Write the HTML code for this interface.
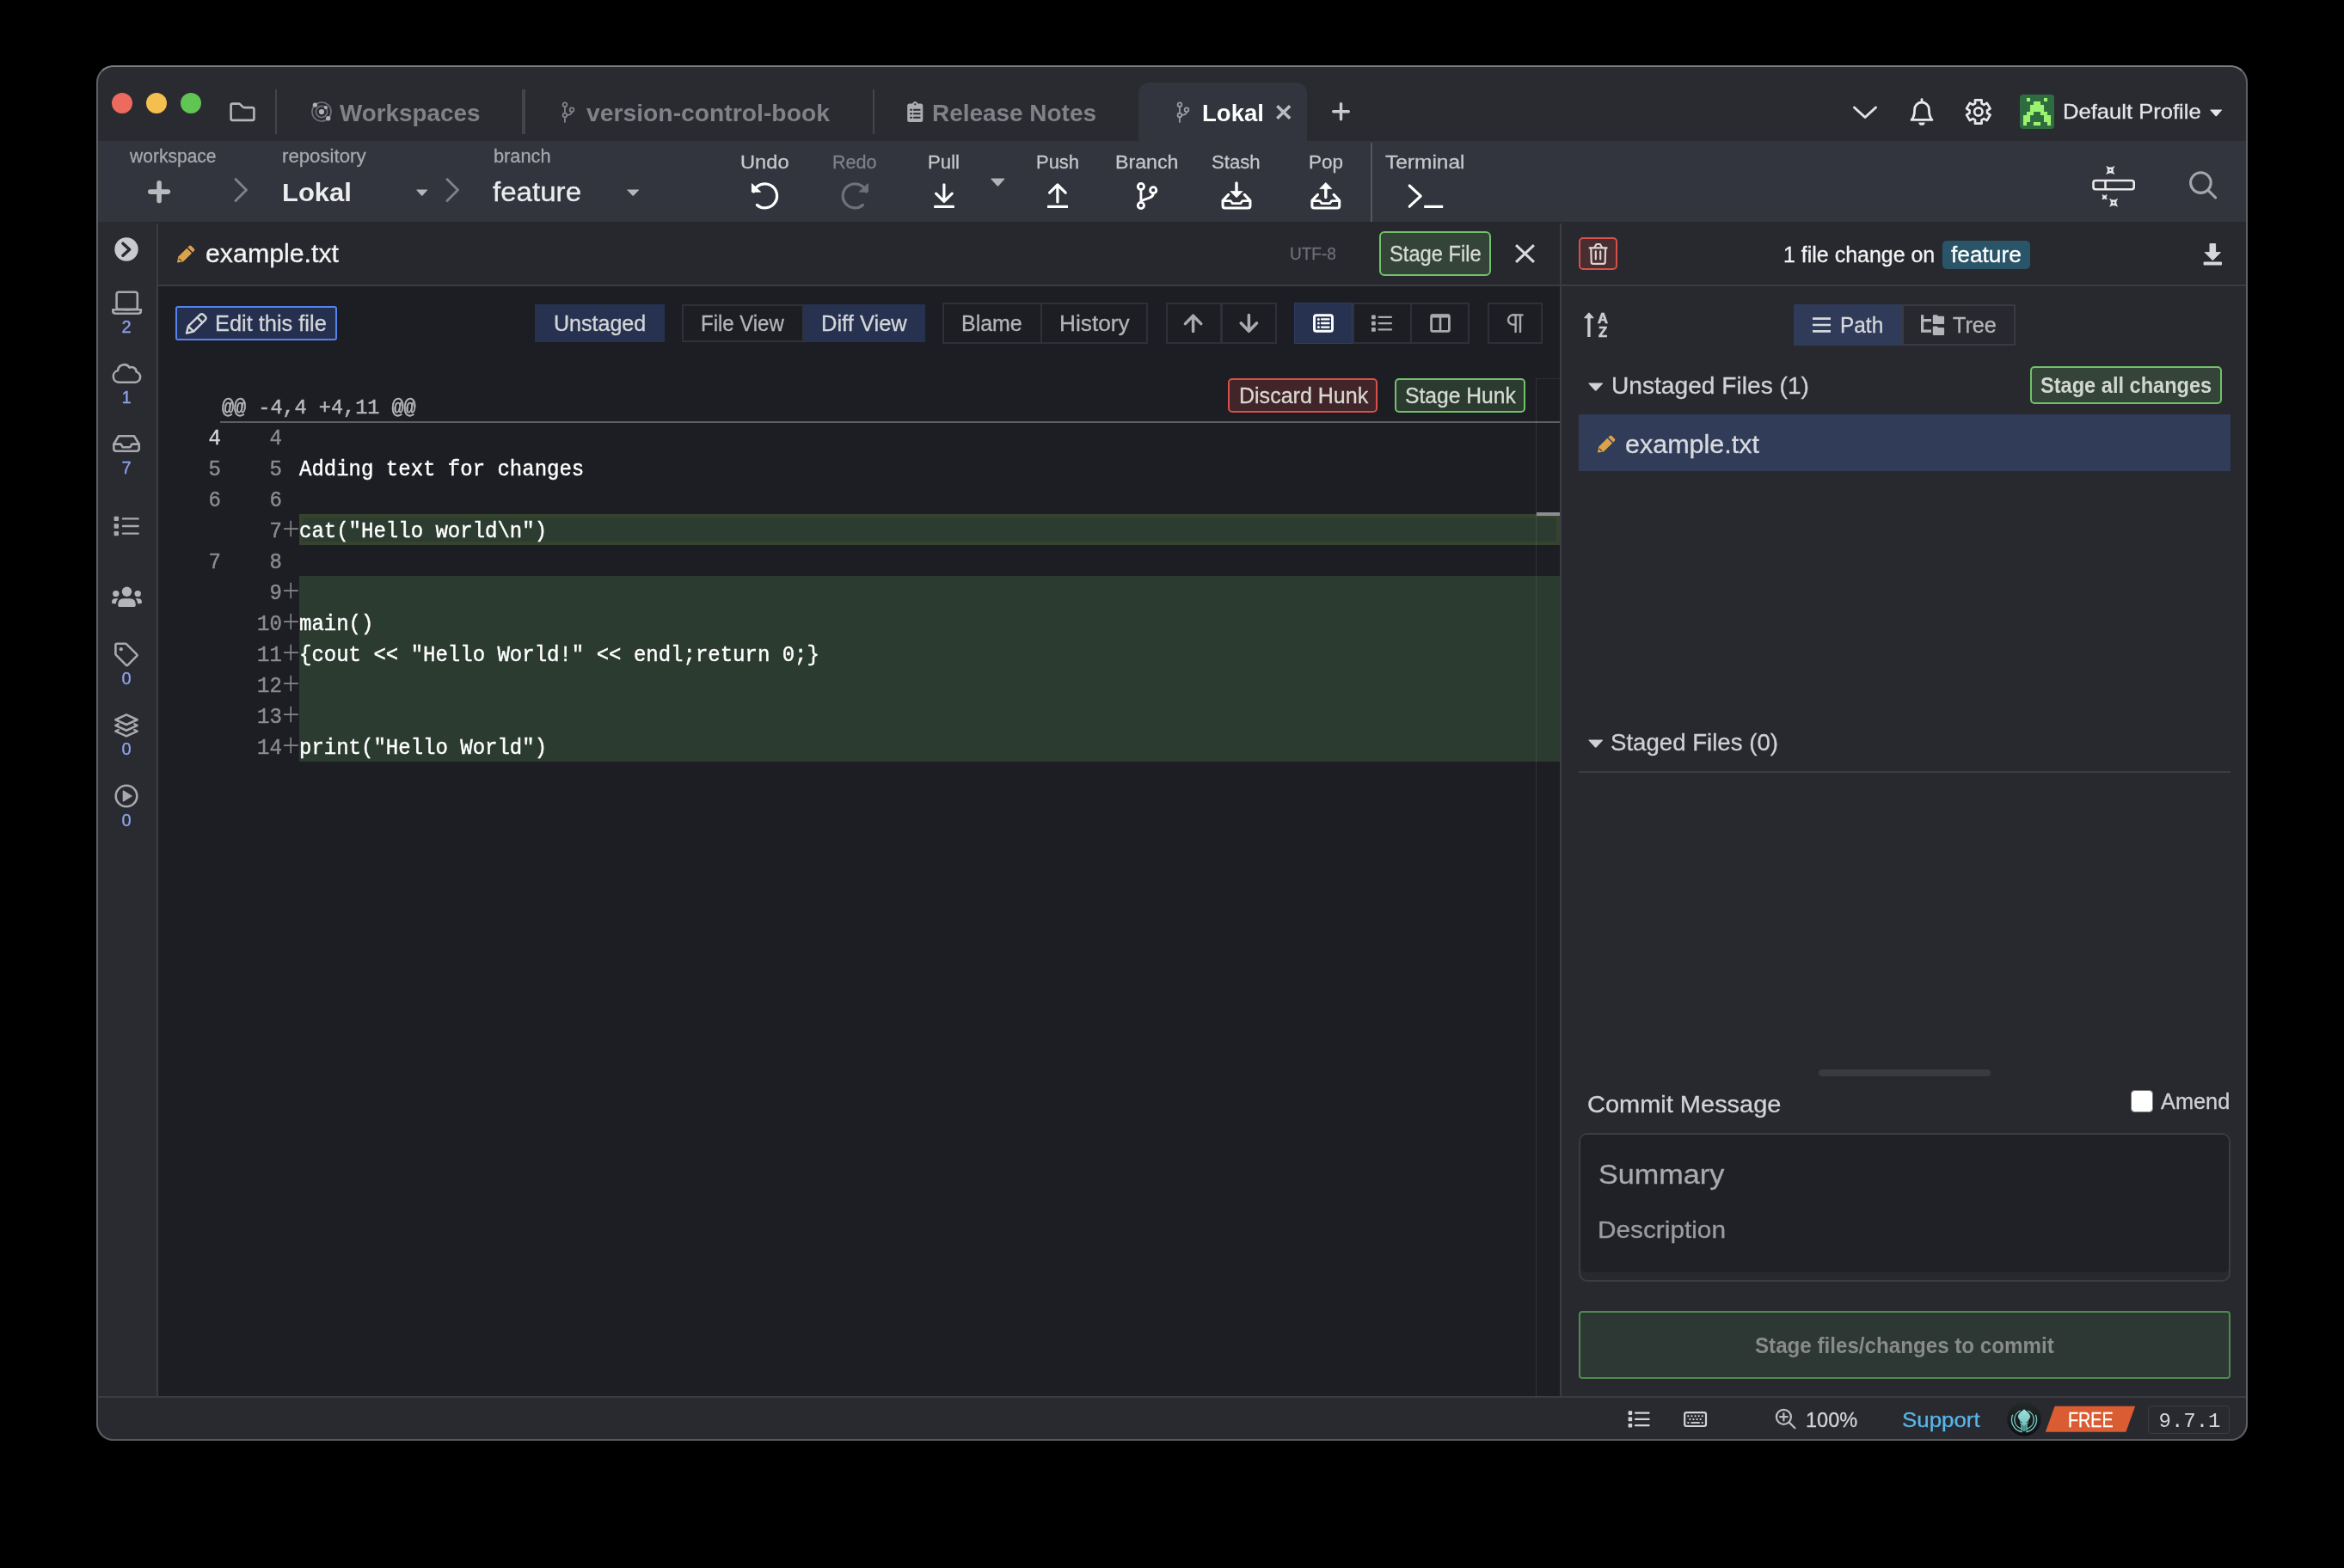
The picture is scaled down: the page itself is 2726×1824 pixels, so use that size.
<!DOCTYPE html>
<html><head><meta charset="utf-8"><title>GitKraken</title>
<style>
html,body{margin:0;padding:0;background:#000;}
body{width:2726px;height:1824px;overflow:hidden;position:relative;font-family:"Liberation Sans",sans-serif;}
#win{will-change:transform;position:absolute;left:112px;top:76px;width:2502px;height:1600px;border-radius:20px;overflow:hidden;background:#1d1e23;}
#winb{position:absolute;left:112px;top:76px;width:2502px;height:1600px;border-radius:20px;box-sizing:border-box;border:2px solid #5f6065;border-top-color:#7e7e83;border-bottom-color:#58595e;pointer-events:none;}
svg{display:block}
</style></head><body>
<div id="win">
<div  style="position:absolute;left:0px;top:0px;width:2502px;height:88px;background:#2a2b31"></div>
<div  style="position:absolute;left:0px;top:88px;width:2502px;height:94px;background:#32343e"></div>
<div  style="position:absolute;left:0px;top:182px;width:70px;height:1367px;background:#2a2b31"></div>
<div  style="position:absolute;left:70px;top:182px;width:1634px;height:73px;background:#27282e"></div>
<div  style="position:absolute;left:72px;top:255px;width:1630px;height:2px;background:#3b3c42"></div>
<div  style="position:absolute;left:70px;top:184px;width:2px;height:1365px;background:#3b3c42"></div>
<div  style="position:absolute;left:72px;top:257px;width:1630px;height:1292px;background:#1d1e23"></div>
<div  style="position:absolute;left:1704px;top:182px;width:798px;height:1367px;background:#27292f"></div>
<div  style="position:absolute;left:1704px;top:255px;width:798px;height:2px;background:#3b3c42"></div>
<div  style="position:absolute;left:1702px;top:184px;width:2px;height:1365px;background:#3b3c42"></div>
<div  style="position:absolute;left:0px;top:1549px;width:2502px;height:51px;background:#292a30"></div>
<div  style="position:absolute;left:0px;top:1548px;width:2502px;height:2px;background:#3b3c42"></div>
<div  style="position:absolute;left:18px;top:32px;width:24px;height:24px;background:#ed6a5e;border-radius:50%"></div>
<div  style="position:absolute;left:58px;top:32px;width:24px;height:24px;background:#f5bf4f;border-radius:50%"></div>
<div  style="position:absolute;left:98px;top:32px;width:24px;height:24px;background:#61c554;border-radius:50%"></div>
<svg style="position:absolute;left:155px;top:42.5px;overflow:visible;" width="30" height="22.5" viewBox="0 0 30 22.5" preserveAspectRatio="none"><path d="M1.6 3.6Q1.6 1.6 3.6 1.6H10.6Q11.6 1.6 12.3 2.3L15.4 5.4Q16.1 6.1 17.1 6.1H26.4Q28.4 6.1 28.4 8.1V18.9Q28.4 20.9 26.4 20.9H3.6Q1.6 20.9 1.6 18.9Z" fill="none" stroke="#b3b5ba" stroke-width="2.6" stroke-linejoin="round"/></svg>
<div  style="position:absolute;left:208px;top:28px;width:2px;height:52px;background:#44454b"></div>
<div  style="position:absolute;left:495px;top:28px;width:4px;height:52px;background:#44454b"></div>
<div  style="position:absolute;left:903px;top:28px;width:2px;height:52px;background:#44454b"></div>
<svg style="position:absolute;left:250px;top:42px;overflow:visible;" width="24" height="24" viewBox="0 0 24 24" preserveAspectRatio="none"><g fill="none" stroke="#6d6f76" stroke-width="1.7"><circle cx="12" cy="12" r="11"/><circle cx="12" cy="12" r="6.6"/></g><circle cx="12" cy="12" r="3.1" fill="#b0b2b6"/><circle cx="4.4" cy="4.1" r="2.7" fill="#b0b2b6"/><circle cx="19.7" cy="19.8" r="2.7" fill="#b0b2b6"/><circle cx="16.9" cy="7.1" r="2.1" fill="#b0b2b6"/></svg>
<div style="position:absolute;top:41.50px;font:bold 28px/1 'Liberation Sans', sans-serif;color:#808288;white-space:pre;transform:scaleX(0.9939);transform-origin:0 0;left:283.12px;">Workspaces</div>
<svg style="position:absolute;left:541px;top:42.5px;overflow:visible;" width="15" height="23" viewBox="0 0 16 24" preserveAspectRatio="none"><g fill="none" stroke="#808288" stroke-width="1.9" stroke-linecap="round"><circle cx="4.2" cy="2.9" r="2.5"/><circle cx="4.2" cy="15.7" r="2.5"/><circle cx="12.8" cy="9.2" r="2.5"/><path d="M4.2 5.4V13.2M4.2 18.2V23.9M12.8 11.7C12.8 15.2 8 15.4 6.7 15.7"/></g></svg>
<div style="position:absolute;top:41.50px;font:bold 28px/1 'Liberation Sans', sans-serif;color:#808288;white-space:pre;transform:scaleX(1.0105);transform-origin:0 0;left:570.02px;">version-control-book</div>
<svg style="position:absolute;left:942.5px;top:42px;overflow:visible;" width="18.5" height="24" viewBox="0 0 18.5 24" preserveAspectRatio="none"><path d="M6.2 2.6A3.1 3.1 0 0 1 12.3 2.6H15.8Q18.3 2.6 18.3 5.1V21.4Q18.3 23.9 15.8 23.9H2.7Q0.2 23.9 0.2 21.4V5.1Q0.2 2.6 2.7 2.6Z" fill="#acadb1"/><circle cx="9.25" cy="3.3" r="1.15" fill="#2a2b31"/><g stroke="#2a2b31" stroke-width="2.1" stroke-linecap="round"><path d="M4 9.8H5M8 9.8H14.6M4 14.3H5M8 14.3H14.6M4 18.8H5M8 18.8H14.6"/></g></svg>
<div style="position:absolute;top:41.50px;font:bold 28px/1 'Liberation Sans', sans-serif;color:#808288;white-space:pre;transform:scaleX(0.9975);transform-origin:0 0;left:971.72px;">Release Notes</div>
<div  style="position:absolute;left:1212px;top:20px;width:196px;height:68px;background:#32343e;border-radius:12px 12px 0 0"></div>
<svg style="position:absolute;left:1256px;top:42.5px;overflow:visible;" width="15" height="23" viewBox="0 0 16 24" preserveAspectRatio="none"><g fill="none" stroke="#9a9ca2" stroke-width="1.9" stroke-linecap="round"><circle cx="4.2" cy="2.9" r="2.5"/><circle cx="4.2" cy="15.7" r="2.5"/><circle cx="12.8" cy="9.2" r="2.5"/><path d="M4.2 5.4V13.2M4.2 18.2V23.9M12.8 11.7C12.8 15.2 8 15.4 6.7 15.7"/></g></svg>
<div style="position:absolute;top:41.50px;font:bold 28px/1 'Liberation Sans', sans-serif;color:#ffffff;white-space:pre;transform:scaleX(0.9839);transform-origin:0 0;left:1286.02px;">Lokal</div>
<svg style="position:absolute;left:1371.5px;top:45.5px;overflow:visible;" width="17.5" height="17" viewBox="0 0 17.5 17.0" preserveAspectRatio="none"><path d="M1.296 1.296L16.204 15.704M16.204 1.296L1.296 15.704" fill="none" stroke="#b9bbc0" stroke-width="3.6" stroke-linecap="butt"/></svg>
<svg style="position:absolute;left:1437px;top:43px;overflow:visible;" width="21" height="21.5" viewBox="0 0 21 21.5" preserveAspectRatio="none"><path d="M10.5 1.7V19.8M1.7 10.75H19.3" fill="none" stroke="#c9cacd" stroke-width="3.4" stroke-linecap="round"/></svg>
<svg style="position:absolute;left:2043px;top:47px;overflow:visible;" width="28" height="15.5" viewBox="0 0 28 15.5" preserveAspectRatio="none"><path d="M1.5 2.0L14.0 13.5L26.5 2.0" fill="none" stroke="#e3e3e5" stroke-width="3" stroke-linecap="round" stroke-linejoin="round"/></svg>
<svg style="position:absolute;left:2109px;top:37.5px;overflow:visible;" width="28" height="32.5" viewBox="0 0 28 32.5" preserveAspectRatio="none"><g fill="none" stroke="#e8e8ea" stroke-width="2.8" stroke-linejoin="round" stroke-linecap="round"><path d="M14 1.6V3.6"/><path d="M2 25.4C5.4 22 5.6 18.5 5.6 13.4A8.4 8.4 0 0 1 22.4 13.4C22.4 18.5 22.6 22 26 25.4Z"/></g><path d="M10.4 28.4H17.6A3.6 3.4 0 0 1 10.4 28.4Z" fill="#e8e8ea"/></svg>
<svg style="position:absolute;left:0;top:0;overflow:visible" width="1" height="1"><g transform="translate(-112 -76)"><path d="M2297.03 120.42L2297.01 116.32L2304.59 116.32L2304.57 120.42A10.3 10.3 0 0 1 2307.21 121.94L2310.75 119.87L2314.55 126.44L2310.99 128.48A10.3 10.3 0 0 1 2310.99 131.52L2314.55 133.56L2310.75 140.13L2307.21 138.06A10.3 10.3 0 0 1 2304.57 139.58L2304.59 143.68L2297.01 143.68L2297.03 139.58A10.3 10.3 0 0 1 2294.39 138.06L2290.85 140.13L2287.05 133.56L2290.61 131.52A10.3 10.3 0 0 1 2290.61 128.48L2287.05 126.44L2290.85 119.87L2294.39 121.94A10.3 10.3 0 0 1 2297.03 120.42Z" fill="none" stroke="#e8e8ea" stroke-width="2.7" stroke-linejoin="round"/><circle cx="2300.8" cy="130" r="4.65" fill="none" stroke="#e8e8ea" stroke-width="2.7"/></g></svg>
<svg style="position:absolute;left:2237px;top:34px;overflow:visible;" width="40" height="40" viewBox="0 0 40 40" preserveAspectRatio="none"><rect width="40" height="40" rx="4" fill="#2e6b3f"/><rect x="7.95" y="3.95" width="4.1" height="4.1" fill="#9bf26f"/><rect x="27.95" y="3.95" width="4.1" height="4.1" fill="#9bf26f"/><rect x="15.95" y="7.95" width="4.1" height="4.1" fill="#9bf26f"/><rect x="19.95" y="7.95" width="4.1" height="4.1" fill="#9bf26f"/><rect x="11.95" y="11.95" width="4.1" height="4.1" fill="#9bf26f"/><rect x="15.95" y="11.95" width="4.1" height="4.1" fill="#9bf26f"/><rect x="19.95" y="11.95" width="4.1" height="4.1" fill="#9bf26f"/><rect x="23.95" y="11.95" width="4.1" height="4.1" fill="#9bf26f"/><rect x="11.95" y="15.95" width="4.1" height="4.1" fill="#9bf26f"/><rect x="15.95" y="15.95" width="4.1" height="4.1" fill="#9bf26f"/><rect x="19.95" y="15.95" width="4.1" height="4.1" fill="#9bf26f"/><rect x="23.95" y="15.95" width="4.1" height="4.1" fill="#9bf26f"/><rect x="7.95" y="19.95" width="4.1" height="4.1" fill="#9bf26f"/><rect x="11.95" y="19.95" width="4.1" height="4.1" fill="#9bf26f"/><rect x="23.95" y="19.95" width="4.1" height="4.1" fill="#9bf26f"/><rect x="27.95" y="19.95" width="4.1" height="4.1" fill="#9bf26f"/><rect x="3.95" y="23.95" width="4.1" height="4.1" fill="#9bf26f"/><rect x="7.95" y="23.95" width="4.1" height="4.1" fill="#9bf26f"/><rect x="27.95" y="23.95" width="4.1" height="4.1" fill="#9bf26f"/><rect x="31.95" y="23.95" width="4.1" height="4.1" fill="#9bf26f"/><rect x="3.95" y="27.95" width="4.1" height="4.1" fill="#9bf26f"/><rect x="7.95" y="27.95" width="4.1" height="4.1" fill="#9bf26f"/><rect x="27.95" y="27.95" width="4.1" height="4.1" fill="#9bf26f"/><rect x="31.95" y="27.95" width="4.1" height="4.1" fill="#9bf26f"/><rect x="3.95" y="31.95" width="4.1" height="4.1" fill="#9bf26f"/><rect x="15.95" y="31.95" width="4.1" height="4.1" fill="#9bf26f"/><rect x="19.95" y="31.95" width="4.1" height="4.1" fill="#9bf26f"/><rect x="31.95" y="31.95" width="4.1" height="4.1" fill="#9bf26f"/></svg>
<div style="position:absolute;top:42.06px;font:normal 24.5px/1 'Liberation Sans', sans-serif;color:#e6e6e8;white-space:pre;-webkit-text-stroke:0.3px #e6e6e8;transform:scaleX(1.0443);transform-origin:0 0;left:2287.14px;">Default Profile</div>
<svg style="position:absolute;left:2457.5px;top:51px;overflow:visible;" width="14.5" height="8.5" viewBox="0 0 10 6" preserveAspectRatio="none"><path d="M0.6 0.3H9.4Q10 0.4 9.6 0.9L5.5 5.6Q5 6.1 4.5 5.6L0.4 0.9Q0 0.4 0.6 0.3Z" fill="#e6e6e8"/></svg>
<div style="position:absolute;top:95.48px;font:normal 22px/1 'Liberation Sans', sans-serif;color:#a6a8ad;white-space:pre;-webkit-text-stroke:0.3px #a6a8ad;transform:scaleX(0.9561);transform-origin:0 0;left:39.43px;">workspace</div>
<div style="position:absolute;top:95.48px;font:normal 22px/1 'Liberation Sans', sans-serif;color:#a6a8ad;white-space:pre;-webkit-text-stroke:0.3px #a6a8ad;transform:scaleX(1.0098);transform-origin:0 0;left:215.73px;">repository</div>
<div style="position:absolute;top:95.48px;font:normal 22px/1 'Liberation Sans', sans-serif;color:#a6a8ad;white-space:pre;-webkit-text-stroke:0.3px #a6a8ad;transform:scaleX(0.9890);transform-origin:0 0;left:461.83px;">branch</div>
<svg style="position:absolute;left:60px;top:133.8px;overflow:visible;" width="26.2" height="26.2" viewBox="0 0 26.19999999999999 26.19999999999999" preserveAspectRatio="none"><path d="M13.099999999999994 2.8V23.399999999999988M2.8 13.099999999999994H23.399999999999988" fill="none" stroke="#b9babe" stroke-width="5.6" stroke-linecap="round"/></svg>
<svg style="position:absolute;left:160px;top:131px;overflow:visible;" width="16.5" height="28" viewBox="0 0 16.5 28" preserveAspectRatio="none"><path d="M2.0 1.5L14.5 14.0L2.0 26.5" fill="none" stroke="#7f8188" stroke-width="3" stroke-linecap="round" stroke-linejoin="round"/></svg>
<div style="position:absolute;top:132.70px;font:bold 30px/1 'Liberation Sans', sans-serif;color:#ededef;white-space:pre;transform:scaleX(1.0311);transform-origin:0 0;left:216.35px;">Lokal</div>
<svg style="position:absolute;left:372px;top:144px;overflow:visible;" width="13.5" height="8" viewBox="0 0 10 6" preserveAspectRatio="none"><path d="M0.6 0.3H9.4Q10 0.4 9.6 0.9L5.5 5.6Q5 6.1 4.5 5.6L0.4 0.9Q0 0.4 0.6 0.3Z" fill="#b5b6ba"/></svg>
<svg style="position:absolute;left:405.5px;top:131px;overflow:visible;" width="16.5" height="28" viewBox="0 0 16.5 28" preserveAspectRatio="none"><path d="M2.0 1.5L14.5 14.0L2.0 26.5" fill="none" stroke="#7f8188" stroke-width="3" stroke-linecap="round" stroke-linejoin="round"/></svg>
<div style="position:absolute;top:130.81px;font:normal 32px/1 'Liberation Sans', sans-serif;color:#ededef;white-space:pre;-webkit-text-stroke:0.3px #ededef;transform:scaleX(1.0343);transform-origin:0 0;left:461.18px;">feature</div>
<svg style="position:absolute;left:617px;top:144px;overflow:visible;" width="14.5" height="8" viewBox="0 0 10 6" preserveAspectRatio="none"><path d="M0.6 0.3H9.4Q10 0.4 9.6 0.9L5.5 5.6Q5 6.1 4.5 5.6L0.4 0.9Q0 0.4 0.6 0.3Z" fill="#b5b6ba"/></svg>
<div style="position:absolute;top:102.08px;font:normal 22px/1 'Liberation Sans', sans-serif;color:#c6c7cb;white-space:pre;-webkit-text-stroke:0.3px #c6c7cb;transform:scaleX(1.0750);transform-origin:0 0;left:749.23px;">Undo</div>
<div style="position:absolute;top:102.08px;font:normal 22px/1 'Liberation Sans', sans-serif;color:#7d8087;white-space:pre;-webkit-text-stroke:0.3px #7d8087;transform:scaleX(0.9800);transform-origin:0 0;left:856.23px;">Redo</div>
<div style="position:absolute;top:102.08px;font:normal 22px/1 'Liberation Sans', sans-serif;color:#c6c7cb;white-space:pre;-webkit-text-stroke:0.3px #c6c7cb;transform:scaleX(1.0096);transform-origin:0 0;left:967.23px;">Pull</div>
<div style="position:absolute;top:102.08px;font:normal 22px/1 'Liberation Sans', sans-serif;color:#c6c7cb;white-space:pre;-webkit-text-stroke:0.3px #c6c7cb;transform:scaleX(0.9977);transform-origin:0 0;left:1092.73px;">Push</div>
<div style="position:absolute;top:102.08px;font:normal 22px/1 'Liberation Sans', sans-serif;color:#c6c7cb;white-space:pre;-webkit-text-stroke:0.3px #c6c7cb;transform:scaleX(1.0548);transform-origin:0 0;left:1185.23px;">Branch</div>
<div style="position:absolute;top:102.08px;font:normal 22px/1 'Liberation Sans', sans-serif;color:#c6c7cb;white-space:pre;-webkit-text-stroke:0.3px #c6c7cb;transform:scaleX(1.0049);transform-origin:0 0;left:1297.23px;">Stash</div>
<div style="position:absolute;top:102.08px;font:normal 22px/1 'Liberation Sans', sans-serif;color:#c6c7cb;white-space:pre;-webkit-text-stroke:0.3px #c6c7cb;transform:scaleX(1.0226);transform-origin:0 0;left:1410.23px;">Pop</div>
<div style="position:absolute;top:102.08px;font:normal 22px/1 'Liberation Sans', sans-serif;color:#c6c7cb;white-space:pre;-webkit-text-stroke:0.3px #c6c7cb;transform:scaleX(1.1131);transform-origin:0 0;left:1499.23px;">Terminal</div>
<svg style="position:absolute;left:0;top:0;overflow:visible" width="1" height="1"><g transform="translate(-112 -76) translate(889.6 227.85)"><path d="M-13.16 -4.79A14.0 14.0 0 1 1 -9.18 10.57" fill="none" stroke="#ffffff" stroke-width="3.3" stroke-linecap="round"/><path d="M-15.2 -14.2V-4.7H-5Z" fill="#ffffff" stroke="#ffffff" stroke-width="1" stroke-linejoin="round"/></g></svg>
<svg style="position:absolute;left:0;top:0;overflow:visible" width="1" height="1"><g transform="translate(-112 -76) translate(994.2 227.85) scale(-1 1)"><path d="M-13.16 -4.79A14.0 14.0 0 1 1 -9.18 10.57" fill="none" stroke="#6e7178" stroke-width="3.3" stroke-linecap="round"/><path d="M-15.2 -14.2V-4.7H-5Z" fill="#6e7178" stroke="#6e7178" stroke-width="1" stroke-linejoin="round"/></g></svg>
<svg style="position:absolute;left:0;top:0;overflow:visible" width="1" height="1"><g transform="translate(-112 -76)"><path d="M1097.9 214.8V233.6M1088.6 225.2L1097.9 234.4L1107.2 225.2" fill="none" stroke="#ffffff" stroke-width="3.2" stroke-linecap="round" stroke-linejoin="round"/><path d="M1086.2 240.4H1109.8" fill="none" stroke="#ffffff" stroke-width="3.2" stroke-linecap="butt" stroke-linejoin="miter"/></g></svg>
<svg style="position:absolute;left:1039.6px;top:131.2px;overflow:visible;" width="16.8" height="9.8" viewBox="0 0 10 6" preserveAspectRatio="none"><path d="M0.6 0.3H9.4Q10 0.4 9.6 0.9L5.5 5.6Q5 6.1 4.5 5.6L0.4 0.9Q0 0.4 0.6 0.3Z" fill="#b1b2b6"/></svg>
<svg style="position:absolute;left:0;top:0;overflow:visible" width="1" height="1"><g transform="translate(-112 -76)"><path d="M1229.9 235V215.6M1220.6 224.2L1229.9 215L1239.2 224.2" fill="none" stroke="#ffffff" stroke-width="3.2" stroke-linecap="round" stroke-linejoin="round"/><path d="M1218 240.4H1242" fill="none" stroke="#ffffff" stroke-width="3.2" stroke-linecap="butt" stroke-linejoin="miter"/></g></svg>
<svg style="position:absolute;left:0;top:0;overflow:visible" width="1" height="1"><g transform="translate(-112 -76)"><g fill="none" stroke="#ffffff" stroke-width="2.9" stroke-linecap="round"><circle cx="1326.9" cy="217" r="3.6"/><circle cx="1326.9" cy="239" r="3.6"/><circle cx="1341.2" cy="221.2" r="3.6"/><path d="M1326.9 220.8V235.2M1341.2 225C1341.2 232 1329 230.5 1327.2 234.6"/></g></g></svg>
<svg style="position:absolute;left:0;top:0;overflow:visible" width="1" height="1"><g transform="translate(-112 -76)"><path d="M1428.7 226.4L1422.1 233.4V239.6Q1422.1 242 1424.5 242H1451.5Q1453.9 242 1453.9 239.6V233.4L1447.3 226.4" fill="none" stroke="#ffffff" stroke-width="3.1" stroke-linejoin="round" stroke-linecap="round"/><path d="M1422.7 233.6H1431.1L1433.3 236.6H1442.7L1444.9 233.6H1453.3" fill="none" stroke="#ffffff" stroke-width="2.7" stroke-linejoin="round"/><path d="M1438 213V226" stroke="#ffffff" stroke-width="3.4" stroke-linecap="round" fill="none"/><path d="M1431 222.6H1445L1438 229.8Z" fill="#ffffff" stroke="#ffffff" stroke-width="0.8" stroke-linejoin="round"/></g></svg>
<svg style="position:absolute;left:0;top:0;overflow:visible" width="1" height="1"><g transform="translate(-112 -76)"><path d="M1532.5 226.4L1525.8999999999999 233.4V239.6Q1525.8999999999999 242 1528.3 242H1555.3Q1557.7 242 1557.7 239.6V233.4L1551.1 226.4" fill="none" stroke="#ffffff" stroke-width="3.1" stroke-linejoin="round" stroke-linecap="round"/><path d="M1526.5 233.6H1534.8999999999999L1537.1 236.6H1546.5L1548.7 233.6H1557.1" fill="none" stroke="#ffffff" stroke-width="2.7" stroke-linejoin="round"/><path d="M1541.8 219V229.6" stroke="#ffffff" stroke-width="3.4" stroke-linecap="round" fill="none"/><path d="M1534.8 219.6H1548.8L1541.8 212.4Z" fill="#ffffff" stroke="#ffffff" stroke-width="0.8" stroke-linejoin="round"/></g></svg>
<div  style="position:absolute;left:1482px;top:90px;width:2px;height:92px;background:#55575e"></div>
<svg style="position:absolute;left:0;top:0;overflow:visible" width="1" height="1"><g transform="translate(-112 -76)"><path d="M1639.2 216L1652.2 228.1L1639.2 240.2" fill="none" stroke="#ffffff" stroke-width="3.2" stroke-linecap="round" stroke-linejoin="round"/><path d="M1656.2 240.4H1678.2" fill="none" stroke="#ffffff" stroke-width="3.2" stroke-linecap="butt" stroke-linejoin="miter"/></g></svg>
<svg style="position:absolute;left:0;top:0;overflow:visible" width="1" height="1"><g transform="translate(-112 -76)"><g fill="none" stroke="#a3a5aa" stroke-width="3.1" stroke-linecap="round"><circle cx="2559.4" cy="212.6" r="11.8"/><path d="M2568.2 221.6L2576.6 229.8"/></g></g></svg>
<svg style="position:absolute;left:0;top:0;overflow:visible" width="1" height="1"><g transform="translate(-112 -76)"><rect x="2434.5" y="210" width="47.2" height="10.2" rx="2.6" fill="none" stroke="#e9e9eb" stroke-width="2.6"/><path d="M2448.5 210V220.2" stroke="#e9e9eb" stroke-width="2.6"/><path d="M2449.8 193.5Q2454.3 196.74 2458.8 193.5Q2455.5600000000004 198 2458.8 202.5Q2454.3 199.26 2449.8 202.5Q2453.04 198 2449.8 193.5Z" fill="#e9e9eb" stroke="#e9e9eb" stroke-width="0.8" stroke-linejoin="round"/><circle cx="2454.3" cy="198" r="1.08" fill="#32343e"/><path d="M2445.0 226.70000000000002Q2447.6 228.572 2450.2 226.70000000000002Q2448.328 229.3 2450.2 231.9Q2447.6 230.02800000000002 2445.0 231.9Q2446.872 229.3 2445.0 226.70000000000002Z" fill="#e9e9eb" stroke="#e9e9eb" stroke-width="0.8" stroke-linejoin="round"/><path d="M2453.7 231.4Q2458.1 234.568 2462.5 231.4Q2459.332 235.8 2462.5 240.20000000000002Q2458.1 237.032 2453.7 240.20000000000002Q2456.868 235.8 2453.7 231.4Z" fill="#e9e9eb" stroke="#e9e9eb" stroke-width="0.8" stroke-linejoin="round"/><circle cx="2458.1" cy="235.8" r="1.06" fill="#32343e"/></g></svg>
<svg style="position:absolute;left:0;top:0;overflow:visible" width="1" height="1"><g transform="translate(-112 -76)"><circle cx="147" cy="290" r="13.7" fill="#c9cacd"/><path d="M143 283.2L150.6 290.2L143 297.2" fill="none" stroke="#2a2b31" stroke-width="3.6" stroke-linecap="round" stroke-linejoin="round"/></g></svg>
<svg style="position:absolute;left:0;top:0;overflow:visible" width="1" height="1"><g transform="translate(-112 -76)"><rect x="135.6" y="339.8" width="24.2" height="20" rx="2.6" fill="none" stroke="#a7a9ae" stroke-width="2.6" stroke-linejoin="round" stroke-linecap="round"/><path d="M131.3 360.2H163.9V361.4Q163.9 364.7 160.6 364.7H134.6Q131.3 364.7 131.3 361.4Z" fill="none" stroke="#a7a9ae" stroke-width="2.6" stroke-linejoin="round" stroke-linecap="round"/><path d="M143.8 360.6H151.4" stroke="#a7a9ae" stroke-width="1.6"/></g></svg>
<div style="position:absolute;top:294.07px;font:normal 20px/1 'Liberation Sans', sans-serif;color:#8ea3ee;white-space:pre;-webkit-text-stroke:0.3px #8ea3ee;left:-965.00px;width:2000px;text-align:center;">2</div>
<svg style="position:absolute;left:0;top:0;overflow:visible" width="1" height="1"><g transform="translate(-112 -76)"><path d="M138.6 444.7A6.9 6.9 0 0 1 137 431.1A7.4 7.4 0 0 1 150.6 427.6A5.6 5.6 0 0 1 158.6 432.4A6.3 6.3 0 0 1 157.4 444.7Z" fill="none" stroke="#a7a9ae" stroke-width="2.6" stroke-linejoin="round" stroke-linecap="round"/></g></svg>
<div style="position:absolute;top:376.07px;font:normal 20px/1 'Liberation Sans', sans-serif;color:#8ea3ee;white-space:pre;-webkit-text-stroke:0.3px #8ea3ee;left:-965.00px;width:2000px;text-align:center;">1</div>
<svg style="position:absolute;left:0;top:0;overflow:visible" width="1" height="1"><g transform="translate(-112 -76)"><path d="M138 507.3H156L161.7 516.6V521.8Q161.7 524.7 158.8 524.7H135.2Q132.3 524.7 132.3 521.8V516.6Z" fill="none" stroke="#a7a9ae" stroke-width="2.6" stroke-linejoin="round" stroke-linecap="round"/><path d="M132.6 516.6H140.6L142.6 520.2H151.4L153.4 516.6H161.4" fill="none" stroke="#a7a9ae" stroke-width="2.6" stroke-linejoin="round" stroke-linecap="round"/></g></svg>
<div style="position:absolute;top:458.07px;font:normal 20px/1 'Liberation Sans', sans-serif;color:#8ea3ee;white-space:pre;-webkit-text-stroke:0.3px #8ea3ee;left:-965.00px;width:2000px;text-align:center;">7</div>
<svg style="position:absolute;left:0;top:0;overflow:visible" width="1" height="1"><g transform="translate(-112 -76)"><rect x="132.6" y="600.6999999999999" width="5.4" height="5.4" rx="0.8" fill="#a7a9ae"/><path d="M143 603.4H160.6" stroke="#a7a9ae" stroke-width="2.4" stroke-linecap="round"/><rect x="132.6" y="609.3" width="5.4" height="5.4" rx="0.8" fill="#a7a9ae"/><path d="M143 612H160.6" stroke="#a7a9ae" stroke-width="2.4" stroke-linecap="round"/><rect x="132.6" y="617.9" width="5.4" height="5.4" rx="0.8" fill="#a7a9ae"/><path d="M143 620.6H160.6" stroke="#a7a9ae" stroke-width="2.4" stroke-linecap="round"/></g></svg>
<svg style="position:absolute;left:0;top:0;overflow:visible" width="1" height="1"><g transform="translate(-112 -76)"><circle cx="147.5" cy="688.3" r="5.7" fill="#b3b5b9"/><path d="M137.2 703.4Q137.2 696.2 144 696.2H151Q157.8 696.2 157.8 703.4Q157.8 706 155.2 706H139.8Q137.2 706 137.2 703.4Z" fill="#b3b5b9"/><circle cx="134.8" cy="690.6" r="3.7" fill="#b3b5b9"/><circle cx="160.2" cy="690.6" r="3.7" fill="#b3b5b9"/><path d="M130 700.6Q130 696.2 134.4 696.2H137.4Q135 698.6 134.8 702.2H131.6Q130 702.2 130 700.6Z" fill="#b3b5b9"/><path d="M165 700.6Q165 696.2 160.6 696.2H157.6Q160 698.6 160.2 702.2H163.4Q165 702.2 165 700.6Z" fill="#b3b5b9"/></g></svg>
<svg style="position:absolute;left:0;top:0;overflow:visible" width="1" height="1"><g transform="translate(-112 -76)"><path d="M134.4 750.4Q134.4 748.8 136 748.8H145.6Q146.6 748.8 147.4 749.6L159 761.2Q160 762.2 159 763.2L148.6 773.6Q147.6 774.6 146.6 773.6L135.2 762.2Q134.4 761.4 134.4 760.4Z" fill="none" stroke="#a7a9ae" stroke-width="2.6" stroke-linejoin="round" stroke-linecap="round"/><circle cx="140.8" cy="755.2" r="2.1" fill="#a7a9ae"/></g></svg>
<div style="position:absolute;top:703.07px;font:normal 20px/1 'Liberation Sans', sans-serif;color:#8ea3ee;white-space:pre;-webkit-text-stroke:0.3px #8ea3ee;left:-965.00px;width:2000px;text-align:center;">0</div>
<svg style="position:absolute;left:0;top:0;overflow:visible" width="1" height="1"><g transform="translate(-112 -76)"><path d="M147 831.4L159.6 837.2L147 843L134.4 837.2Z" fill="none" stroke="#a7a9ae" stroke-width="2.6" stroke-linejoin="round" stroke-linecap="round"/><path d="M137.6 842.4L134.4 843.9L147 849.7L159.6 843.9L156.4 842.4" fill="none" stroke="#a7a9ae" stroke-width="2.6" stroke-linejoin="round" stroke-linecap="round"/><path d="M137.6 849.1L134.4 850.6L147 856.4L159.6 850.6L156.4 849.1" fill="none" stroke="#a7a9ae" stroke-width="2.6" stroke-linejoin="round" stroke-linecap="round"/></g></svg>
<div style="position:absolute;top:785.07px;font:normal 20px/1 'Liberation Sans', sans-serif;color:#8ea3ee;white-space:pre;-webkit-text-stroke:0.3px #8ea3ee;left:-965.00px;width:2000px;text-align:center;">0</div>
<svg style="position:absolute;left:0;top:0;overflow:visible" width="1" height="1"><g transform="translate(-112 -76)"><circle cx="147" cy="926" r="12.3" fill="none" stroke="#a7a9ae" stroke-width="2.6" stroke-linejoin="round" stroke-linecap="round"/><path d="M143.4 920.2V931.8L153 926Z" fill="#a7a9ae" stroke="#a7a9ae" stroke-width="1.4" stroke-linejoin="round"/></g></svg>
<div style="position:absolute;top:868.07px;font:normal 20px/1 'Liberation Sans', sans-serif;color:#8ea3ee;white-space:pre;-webkit-text-stroke:0.3px #8ea3ee;left:-965.00px;width:2000px;text-align:center;">0</div>
<svg style="position:absolute;left:94px;top:209px;overflow:visible;" width="21" height="20.5" viewBox="0 0 21 21" preserveAspectRatio="none"><path d="M14.1 1.1Q15.2 0 16.3 1.1L19.9 4.7Q21 5.8 19.9 6.9L18.2 8.6L12.4 2.8Z" fill="#dba24c"/><path d="M11.3 3.9L17.1 9.7L7.2 19.6L0.9 20.9Q0 21 0.1 20.1L1.4 13.8Z" fill="#dba24c"/><path d="M1.9 16.2L4.8 19.1" stroke="#27282e" stroke-width="1.1"/></svg>
<div style="position:absolute;top:205.45px;font:normal 29px/1 'Liberation Sans', sans-serif;color:#f4f4f5;white-space:pre;-webkit-text-stroke:0.3px #f4f4f5;transform:scaleX(1.0454);transform-origin:0 0;left:127.19px;">example.txt</div>
<div style="position:absolute;top:209.07px;font:normal 20px/1 'Liberation Sans', sans-serif;color:#6d6f76;white-space:pre;-webkit-text-stroke:0.3px #6d6f76;transform:scaleX(0.9511);transform-origin:0 0;left:1388.30px;">UTF-8</div>
<div  style="position:absolute;left:1492px;top:193px;width:130px;height:51.5px;box-sizing:border-box;border:2px solid #72c26c;background:#344438;border-radius:6px"></div>
<div style="position:absolute;top:207.04px;font:normal 25px/1 'Liberation Sans', sans-serif;color:#d6dad6;white-space:pre;-webkit-text-stroke:0.3px #d6dad6;transform:scaleX(0.9484);transform-origin:0 0;left:1503.83px;">Stage File</div>
<svg style="position:absolute;left:1650px;top:208px;overflow:visible;" width="23" height="22" viewBox="0 0 23 22" preserveAspectRatio="none"><path d="M1.08 1.08L21.92 20.92M21.92 1.08L1.08 20.92" fill="none" stroke="#dadadc" stroke-width="3" stroke-linecap="butt"/></svg>
<div  style="position:absolute;left:92px;top:280px;width:188px;height:40px;box-sizing:border-box;border:2px solid #5583ef;background:#25304e;border-radius:3px"></div>
<svg style="position:absolute;left:0;top:0;overflow:visible" width="1" height="1"><g transform="translate(-112 -76)"><g fill="none" stroke="#d3d5d9" stroke-width="2.4" stroke-linejoin="round" stroke-linecap="round"><path d="M232.6 366.2Q234.6 364.2 236.6 366.2L238.6 368.2Q240.6 370.2 238.6 372.2L225.2 385.6L217 387.6L219 379.4Z"/><path d="M229.6 369.4L235.4 375.2"/><path d="M219.4 380L224.6 385.2"/></g></g></svg>
<div style="position:absolute;top:287.84px;font:normal 25px/1 'Liberation Sans', sans-serif;color:#d3d5d9;white-space:pre;-webkit-text-stroke:0.3px #d3d5d9;transform:scaleX(1.0149);transform-origin:0 0;left:138.12px;">Edit this file</div>
<div  style="position:absolute;left:510px;top:278px;width:151px;height:44px;background:#263250"></div>
<div style="position:absolute;top:287.84px;font:normal 25px/1 'Liberation Sans', sans-serif;color:#d3d5d9;white-space:pre;-webkit-text-stroke:0.3px #d3d5d9;transform:scaleX(1.0020);transform-origin:0 0;left:531.62px;">Unstaged</div>
<div  style="position:absolute;left:681px;top:278px;width:142px;height:44px;box-sizing:border-box;border:2px solid #303138"></div>
<div style="position:absolute;top:287.84px;font:normal 25px/1 'Liberation Sans', sans-serif;color:#b3b4b8;white-space:pre;-webkit-text-stroke:0.3px #b3b4b8;transform:scaleX(0.9582);transform-origin:0 0;left:703.12px;">File View</div>
<div  style="position:absolute;left:821.5px;top:278px;width:142.5px;height:44px;background:#263250"></div>
<div style="position:absolute;top:287.84px;font:normal 25px/1 'Liberation Sans', sans-serif;color:#d3d5d9;white-space:pre;-webkit-text-stroke:0.3px #d3d5d9;transform:scaleX(1.0206);transform-origin:0 0;left:843.12px;">Diff View</div>
<div  style="position:absolute;left:984px;top:276px;width:116px;height:47.5px;box-sizing:border-box;border:2px solid #303138"></div>
<div  style="position:absolute;left:1098px;top:276px;width:125px;height:47.5px;box-sizing:border-box;border:2px solid #303138"></div>
<div style="position:absolute;top:287.84px;font:normal 25px/1 'Liberation Sans', sans-serif;color:#b3b4b8;white-space:pre;-webkit-text-stroke:0.3px #b3b4b8;transform:scaleX(0.9982);transform-origin:0 0;left:1006.12px;">Blame</div>
<div style="position:absolute;top:287.84px;font:normal 25px/1 'Liberation Sans', sans-serif;color:#b3b4b8;white-space:pre;-webkit-text-stroke:0.3px #b3b4b8;transform:scaleX(1.0508);transform-origin:0 0;left:1120.12px;">History</div>
<div  style="position:absolute;left:1243.5px;top:276px;width:65.5px;height:47.5px;box-sizing:border-box;border:2px solid #303138"></div>
<div  style="position:absolute;left:1307.5px;top:276px;width:65.5px;height:47.5px;box-sizing:border-box;border:2px solid #303138"></div>
<svg style="position:absolute;left:0;top:0;overflow:visible" width="1" height="1"><g transform="translate(-112 -76)"><path d="M1387.6 385.6V367.4M1378.4 376.6L1387.6 367.2L1396.8 376.6" fill="none" stroke="#a9aaae" stroke-width="3.5" stroke-linecap="round" stroke-linejoin="round"/><path d="M1452.4 366.6V384.8M1443.2 375.8L1452.4 385.2L1461.6 375.8" fill="none" stroke="#a9aaae" stroke-width="3.5" stroke-linecap="round" stroke-linejoin="round"/></g></svg>
<div  style="position:absolute;left:1393px;top:276px;width:68px;height:47.5px;background:#263250;box-sizing:border-box;border:1px solid #2f3c5e"></div>
<div  style="position:absolute;left:1461px;top:276px;width:69px;height:47.5px;box-sizing:border-box;border:2px solid #303138"></div>
<div  style="position:absolute;left:1528px;top:276px;width:69px;height:47.5px;box-sizing:border-box;border:2px solid #303138"></div>
<div  style="position:absolute;left:1617.5px;top:276px;width:64.5px;height:47.5px;box-sizing:border-box;border:2px solid #303138"></div>
<svg style="position:absolute;left:0;top:0;overflow:visible" width="1" height="1"><g transform="translate(-112 -76)"><rect x="1528.5" y="366.7" width="21" height="18.6" rx="2.4" fill="none" stroke="#fff" stroke-width="2.9"/><circle cx="1533.4" cy="371.4" r="1.5" fill="#fff"/><path d="M1537 371.4H1545.6" stroke="#fff" stroke-width="2.3" stroke-linecap="round"/><circle cx="1533.4" cy="376" r="1.5" fill="#fff"/><path d="M1537 376H1545.6" stroke="#fff" stroke-width="2.3" stroke-linecap="round"/><circle cx="1533.4" cy="380.6" r="1.5" fill="#fff"/><path d="M1537 380.6H1545.6" stroke="#fff" stroke-width="2.3" stroke-linecap="round"/></g></svg>
<svg style="position:absolute;left:0;top:0;overflow:visible" width="1" height="1"><g transform="translate(-112 -76)"><rect x="1595" y="366.40000000000003" width="4.8" height="4.8" rx="0.9" fill="#a9aaae"/><path d="M1603.6 368.8H1618" stroke="#a9aaae" stroke-width="2.3" stroke-linecap="round"/><rect x="1595" y="373.70000000000005" width="4.8" height="4.8" rx="0.9" fill="#a9aaae"/><path d="M1603.6 376.1H1618" stroke="#a9aaae" stroke-width="2.3" stroke-linecap="round"/><rect x="1595" y="381.0" width="4.8" height="4.8" rx="0.9" fill="#a9aaae"/><path d="M1603.6 383.4H1618" stroke="#a9aaae" stroke-width="2.3" stroke-linecap="round"/></g></svg>
<svg style="position:absolute;left:0;top:0;overflow:visible" width="1" height="1"><g transform="translate(-112 -76)"><rect x="1664.6" y="366.7" width="20.8" height="18.6" rx="1.8" fill="none" stroke="#a9aaae" stroke-width="2.8"/><path d="M1664.6 367.6H1685.4" stroke="#a9aaae" stroke-width="4"/><path d="M1675 367V385.4" stroke="#a9aaae" stroke-width="2.6"/></g></svg>
<svg style="position:absolute;left:0;top:0;overflow:visible" width="1" height="1"><g transform="translate(-112 -76)"><g fill="none" stroke="#a9aaae" stroke-width="2.4" stroke-linecap="round"><path d="M1762.6 366.4H1759.6A5.6 5.6 0 0 0 1759.6 377.6H1762.6"/><path d="M1762.6 366.4V386M1768 366.4V386M1759.6 366.4H1770.6"/></g></g></svg>
<div style="position:absolute;top:387.00px;font:normal 23.5px/1 'Liberation Mono', monospace;color:#b6b7ba;white-space:pre;-webkit-text-stroke:0.5px #b6b7ba;left:146.00px;">@@ -4,4 +4,11 @@</div>
<div  style="position:absolute;left:1316px;top:364px;width:174px;height:40px;box-sizing:border-box;border:2px solid #d8504a;background:#412528;border-radius:5px"></div>
<div style="position:absolute;top:371.84px;font:normal 25px/1 'Liberation Sans', sans-serif;color:#d9d6d6;white-space:pre;-webkit-text-stroke:0.3px #d9d6d6;transform:scaleX(1.0006);transform-origin:0 0;left:1328.92px;">Discard Hunk</div>
<div  style="position:absolute;left:1510px;top:364px;width:152px;height:40px;box-sizing:border-box;border:2px solid #72c26c;background:#2c3b2f;border-radius:5px"></div>
<div style="position:absolute;top:371.84px;font:normal 25px/1 'Liberation Sans', sans-serif;color:#d6dad6;white-space:pre;-webkit-text-stroke:0.3px #d6dad6;transform:scaleX(0.9855);transform-origin:0 0;left:1522.03px;">Stage Hunk</div>
<div  style="position:absolute;left:236px;top:522px;width:1466px;height:36px;background:#2d3c31;box-sizing:border-box;border:4px solid #36432f"></div>
<div  style="position:absolute;left:236px;top:594px;width:1466px;height:216px;background:#2b3b30"></div>
<div  style="position:absolute;left:144px;top:414px;width:1558px;height:2px;background:#5d5e62"></div>
<div  style="position:absolute;left:1674px;top:364px;width:1px;height:1185px;background:rgba(255,255,255,0.09)"></div>
<div  style="position:absolute;left:1674px;top:364px;width:28px;height:1px;background:rgba(255,255,255,0.07)"></div>
<div  style="position:absolute;left:1675px;top:520px;width:27px;height:4px;background:#8c8e91"></div>
<div style="position:absolute;top:420.80px;right:2357.5px;transform-origin:100% 0;transform:scaleX(0.9057);font:26.5px/1 'Liberation Mono',monospace;color:#d4d4d6;-webkit-text-stroke:0.45px #d4d4d6;white-space:pre">4</div>
<div style="position:absolute;top:420.80px;right:2286px;transform-origin:100% 0;transform:scaleX(0.9057);font:26.5px/1 'Liberation Mono',monospace;color:#8b8c8f;-webkit-text-stroke:0.45px #8b8c8f;white-space:pre">4</div>
<div style="position:absolute;top:456.80px;right:2357.5px;transform-origin:100% 0;transform:scaleX(0.9057);font:26.5px/1 'Liberation Mono',monospace;color:#8b8c8f;-webkit-text-stroke:0.45px #8b8c8f;white-space:pre">5</div>
<div style="position:absolute;top:456.80px;right:2286px;transform-origin:100% 0;transform:scaleX(0.9057);font:26.5px/1 'Liberation Mono',monospace;color:#8b8c8f;-webkit-text-stroke:0.45px #8b8c8f;white-space:pre">5</div>
<div style="position:absolute;top:456.80px;left:236.2px;transform-origin:0 0;transform:scaleX(0.9057);font:26.5px/1 'Liberation Mono',monospace;color:#ffffff;-webkit-text-stroke:0.45px #ffffff;white-space:pre">Adding text for changes</div>
<div style="position:absolute;top:492.80px;right:2357.5px;transform-origin:100% 0;transform:scaleX(0.9057);font:26.5px/1 'Liberation Mono',monospace;color:#8b8c8f;-webkit-text-stroke:0.45px #8b8c8f;white-space:pre">6</div>
<div style="position:absolute;top:492.80px;right:2286px;transform-origin:100% 0;transform:scaleX(0.9057);font:26.5px/1 'Liberation Mono',monospace;color:#8b8c8f;-webkit-text-stroke:0.45px #8b8c8f;white-space:pre">6</div>
<div style="position:absolute;top:528.80px;right:2286px;transform-origin:100% 0;transform:scaleX(0.9057);font:26.5px/1 'Liberation Mono',monospace;color:#8b8c8f;-webkit-text-stroke:0.45px #8b8c8f;white-space:pre">7</div>
<div style="position:absolute;top:528.80px;left:236.2px;transform-origin:0 0;transform:scaleX(0.9057);font:26.5px/1 'Liberation Mono',monospace;color:#ffffff;-webkit-text-stroke:0.45px #ffffff;white-space:pre">cat("Hello world\n")</div>
<div style="position:absolute;top:564.80px;right:2357.5px;transform-origin:100% 0;transform:scaleX(0.9057);font:26.5px/1 'Liberation Mono',monospace;color:#8b8c8f;-webkit-text-stroke:0.45px #8b8c8f;white-space:pre">7</div>
<div style="position:absolute;top:564.80px;right:2286px;transform-origin:100% 0;transform:scaleX(0.9057);font:26.5px/1 'Liberation Mono',monospace;color:#8b8c8f;-webkit-text-stroke:0.45px #8b8c8f;white-space:pre">8</div>
<div style="position:absolute;top:600.80px;right:2286px;transform-origin:100% 0;transform:scaleX(0.9057);font:26.5px/1 'Liberation Mono',monospace;color:#8b8c8f;-webkit-text-stroke:0.45px #8b8c8f;white-space:pre">9</div>
<div style="position:absolute;top:636.80px;right:2286px;transform-origin:100% 0;transform:scaleX(0.9057);font:26.5px/1 'Liberation Mono',monospace;color:#8b8c8f;-webkit-text-stroke:0.45px #8b8c8f;white-space:pre">10</div>
<div style="position:absolute;top:636.80px;left:236.2px;transform-origin:0 0;transform:scaleX(0.9057);font:26.5px/1 'Liberation Mono',monospace;color:#ffffff;-webkit-text-stroke:0.45px #ffffff;white-space:pre">main()</div>
<div style="position:absolute;top:672.80px;right:2286px;transform-origin:100% 0;transform:scaleX(0.9057);font:26.5px/1 'Liberation Mono',monospace;color:#8b8c8f;-webkit-text-stroke:0.45px #8b8c8f;white-space:pre">11</div>
<div style="position:absolute;top:672.80px;left:236.2px;transform-origin:0 0;transform:scaleX(0.9057);font:26.5px/1 'Liberation Mono',monospace;color:#ffffff;-webkit-text-stroke:0.45px #ffffff;white-space:pre">{cout &lt;&lt; "Hello World!" &lt;&lt; endl;return 0;}</div>
<div style="position:absolute;top:708.80px;right:2286px;transform-origin:100% 0;transform:scaleX(0.9057);font:26.5px/1 'Liberation Mono',monospace;color:#8b8c8f;-webkit-text-stroke:0.45px #8b8c8f;white-space:pre">12</div>
<div style="position:absolute;top:744.80px;right:2286px;transform-origin:100% 0;transform:scaleX(0.9057);font:26.5px/1 'Liberation Mono',monospace;color:#8b8c8f;-webkit-text-stroke:0.45px #8b8c8f;white-space:pre">13</div>
<div style="position:absolute;top:780.80px;right:2286px;transform-origin:100% 0;transform:scaleX(0.9057);font:26.5px/1 'Liberation Mono',monospace;color:#8b8c8f;-webkit-text-stroke:0.45px #8b8c8f;white-space:pre">14</div>
<div style="position:absolute;top:780.80px;left:236.2px;transform-origin:0 0;transform:scaleX(0.9057);font:26.5px/1 'Liberation Mono',monospace;color:#ffffff;-webkit-text-stroke:0.45px #ffffff;white-space:pre">print("Hello World")</div>
<svg style="position:absolute;left:0;top:0;overflow:visible" width="1" height="1"><g transform="translate(-112 -76)"><path d="M330 615.1H346.8M338.2 605.8V624.3M330 687.1H346.8M338.2 677.8V696.3M330 723.1H346.8M338.2 713.8V732.3M330 759.1H346.8M338.2 749.8V768.3M330 795.1H346.8M338.2 785.8V804.3M330 831.1H346.8M338.2 821.8V840.3M330 867.1H346.8M338.2 857.8V876.3" stroke="#85878b" stroke-width="1.6" fill="none"/></g></svg>
<div  style="position:absolute;left:1724px;top:200px;width:45px;height:38px;box-sizing:border-box;border:2px solid #d8504a;background:#482d31;border-radius:5px"></div>
<svg style="position:absolute;left:0;top:0;overflow:visible" width="1" height="1"><g transform="translate(-112 -76)"><g fill="none" stroke="#dad4d4" stroke-width="2.2" stroke-linejoin="round" stroke-linecap="round"><path d="M1848.6 288.4H1868.6"/><path d="M1854.2 288L1856.6 284H1860.8L1863.2 288"/><path d="M1850.3 288.8L1850.7 305Q1850.8 306.8 1852.6 306.8H1864.8Q1866.6 306.8 1866.7 305L1867.1 288.8"/><path d="M1855.8 292.4V301.6M1861.2 292.4V301.6"/></g></g></svg>
<div style="position:absolute;top:208.34px;font:normal 25px/1 'Liberation Sans', sans-serif;color:#f2f2f3;white-space:pre;-webkit-text-stroke:0.3px #f2f2f3;transform:scaleX(0.9984);transform-origin:0 0;left:1961.62px;">1 file change on</div>
<div  style="position:absolute;left:2147px;top:204px;width:102px;height:33px;background:#2a5568;border-radius:5px"></div>
<div style="position:absolute;top:208.34px;font:normal 25px/1 'Liberation Sans', sans-serif;color:#ffffff;white-space:pre;-webkit-text-stroke:0.3px #ffffff;transform:scaleX(1.0502);transform-origin:0 0;left:2157.12px;">feature</div>
<svg style="position:absolute;left:0;top:0;overflow:visible" width="1" height="1"><g transform="translate(-112 -76)"><path d="M2570 283.6H2576.6V293.6H2582.4L2573.3 302.8L2564.2 293.6H2570Z" fill="#d6d7da" stroke="#d6d7da" stroke-width="1" stroke-linejoin="round"/><rect x="2562.6" y="304.4" width="21.4" height="4.2" rx="1" fill="#d6d7da"/></g></svg>
<svg style="position:absolute;left:0;top:0;overflow:visible" width="1" height="1"><g transform="translate(-112 -76)"><path d="M1847.9 367V392" stroke="#cbccd0" stroke-width="3.4" fill="none"/><path d="M1842.6 369.8L1847.9 363.8L1853.2 369.8Z" fill="#cbccd0" stroke="#cbccd0" stroke-width="1" stroke-linejoin="round"/></g></svg>
<div style="position:absolute;top:285.73px;font:bold 16.5px/1 'Liberation Sans', sans-serif;color:#cbccd0;white-space:pre;-webkit-text-stroke:0.7px #cbccd0;left:1746.10px;">A</div>
<div style="position:absolute;top:301.93px;font:bold 16.5px/1 'Liberation Sans', sans-serif;color:#cbccd0;white-space:pre;-webkit-text-stroke:0.7px #cbccd0;left:1747.00px;">Z</div>
<div  style="position:absolute;left:1974px;top:278px;width:126.5px;height:48px;background:#2f3b59"></div>
<div  style="position:absolute;left:2100px;top:278px;width:132px;height:48px;box-sizing:border-box;border:2px solid #3a3b42"></div>
<svg style="position:absolute;left:0;top:0;overflow:visible" width="1" height="1"><g transform="translate(-112 -76)"><path d="M2108 370.6H2129M2108 378H2129M2108 385.4H2129" stroke="#d6d8dc" stroke-width="2.6" fill="none"/></g></svg>
<div style="position:absolute;top:289.94px;font:normal 25px/1 'Liberation Sans', sans-serif;color:#d6d8dc;white-space:pre;-webkit-text-stroke:0.3px #d6d8dc;transform:scaleX(0.9769);transform-origin:0 0;left:2028.12px;">Path</div>
<svg style="position:absolute;left:0;top:0;overflow:visible" width="1" height="1"><g transform="translate(-112 -76)"><path d="M2235.6 366.2V385.2H2246M2235.6 372.6H2246" fill="none" stroke="#b4b5b8" stroke-width="3.2" stroke-linejoin="miter"/><path d="M2247.8 367.4Q2247.8 366.2 2249 366.2H2252.6L2254.2 367.8H2259.9Q2261.1 367.8 2261.1 369V375.9Q2261.1 377.1 2259.9 377.1H2249Q2247.8 377.1 2247.8 375.9Z" fill="#b4b5b8"/><path d="M2247.8 380.6Q2247.8 379.4 2249 379.4H2252.6L2254.2 381H2259.9Q2261.1 381 2261.1 382.2V388.7Q2261.1 389.9 2259.9 389.9H2249Q2247.8 389.9 2247.8 388.7Z" fill="#b4b5b8"/></g></svg>
<div style="position:absolute;top:289.94px;font:normal 25px/1 'Liberation Sans', sans-serif;color:#b4b5b8;white-space:pre;-webkit-text-stroke:0.3px #b4b5b8;transform:scaleX(1.0053);transform-origin:0 0;left:2159.12px;">Tree</div>
<svg style="position:absolute;left:1735px;top:369px;overflow:visible;" width="17.5" height="10" viewBox="0 0 10 6" preserveAspectRatio="none"><path d="M0.6 0.3H9.4Q10 0.4 9.6 0.9L5.5 5.6Q5 6.1 4.5 5.6L0.4 0.9Q0 0.4 0.6 0.3Z" fill="#d0d1d4"/></svg>
<div style="position:absolute;top:358.80px;font:normal 28px/1 'Liberation Sans', sans-serif;color:#d0d1d4;white-space:pre;-webkit-text-stroke:0.3px #d0d1d4;transform:scaleX(1.0052);transform-origin:0 0;left:1761.52px;">Unstaged Files (1)</div>
<div  style="position:absolute;left:2249px;top:350px;width:223px;height:44px;box-sizing:border-box;border:2px solid #70c16a;background:#344439;border-radius:5px"></div>
<div style="position:absolute;top:359.84px;font:bold 25px/1 'Liberation Sans', sans-serif;color:#d2d6d2;white-space:pre;transform:scaleX(0.9434);transform-origin:0 0;left:2260.93px;">Stage all changes</div>
<div  style="position:absolute;left:1724px;top:406px;width:758px;height:66px;background:#313c59"></div>
<svg style="position:absolute;left:1746px;top:430px;overflow:visible;" width="21" height="20.5" viewBox="0 0 21 21" preserveAspectRatio="none"><path d="M14.1 1.1Q15.2 0 16.3 1.1L19.9 4.7Q21 5.8 19.9 6.9L18.2 8.6L12.4 2.8Z" fill="#dba24c"/><path d="M11.3 3.9L17.1 9.7L7.2 19.6L0.9 20.9Q0 21 0.1 20.1L1.4 13.8Z" fill="#dba24c"/><path d="M1.9 16.2L4.8 19.1" stroke="#27282e" stroke-width="1.1"/></svg>
<div style="position:absolute;top:426.95px;font:normal 29px/1 'Liberation Sans', sans-serif;color:#d8dade;white-space:pre;-webkit-text-stroke:0.3px #d8dade;transform:scaleX(1.0521);transform-origin:0 0;left:1777.98px;">example.txt</div>
<svg style="position:absolute;left:1735px;top:784px;overflow:visible;" width="17.5" height="10" viewBox="0 0 10 6" preserveAspectRatio="none"><path d="M0.6 0.3H9.4Q10 0.4 9.6 0.9L5.5 5.6Q5 6.1 4.5 5.6L0.4 0.9Q0 0.4 0.6 0.3Z" fill="#d0d1d4"/></svg>
<div style="position:absolute;top:774.30px;font:normal 28px/1 'Liberation Sans', sans-serif;color:#d0d1d4;white-space:pre;-webkit-text-stroke:0.3px #d0d1d4;transform:scaleX(0.9864);transform-origin:0 0;left:1761.02px;">Staged Files (0)</div>
<div  style="position:absolute;left:1724px;top:821px;width:758px;height:2px;background:#3b3c42"></div>
<div  style="position:absolute;left:2003px;top:1168px;width:200px;height:8px;background:#3a3b41;border-radius:4px"></div>
<div style="position:absolute;top:1195.30px;font:normal 28px/1 'Liberation Sans', sans-serif;color:#d2d3d6;white-space:pre;-webkit-text-stroke:0.3px #d2d3d6;transform:scaleX(1.0350);transform-origin:0 0;left:1734.02px;">Commit Message</div>
<div  style="position:absolute;left:2366px;top:1192px;width:26px;height:26px;box-sizing:border-box;background:#fff;border:1.5px solid #7a7a7d;border-radius:4.5px"></div>
<div style="position:absolute;top:1192.84px;font:normal 25px/1 'Liberation Sans', sans-serif;color:#cfd0d3;white-space:pre;-webkit-text-stroke:0.3px #cfd0d3;transform:scaleX(1.0130);transform-origin:0 0;left:2401.12px;">Amend</div>
<div  style="position:absolute;left:1724px;top:1242px;width:758px;height:173px;box-sizing:border-box;border:2px solid #3b3c42;border-radius:10px;background:#27292f"></div>
<div  style="position:absolute;left:1726px;top:1244px;width:754px;height:160px;background:#202126;border-radius:8px 8px 6px 6px"></div>
<div style="position:absolute;top:1273.91px;font:normal 32px/1 'Liberation Sans', sans-serif;color:#a9aaad;white-space:pre;-webkit-text-stroke:0.3px #a9aaad;transform:scaleX(1.0682);transform-origin:0 0;left:1746.88px;">Summary</div>
<div style="position:absolute;top:1341.30px;font:normal 28px/1 'Liberation Sans', sans-serif;color:#9b9c9f;white-space:pre;-webkit-text-stroke:0.3px #9b9c9f;transform:scaleX(1.0635);transform-origin:0 0;left:1746.02px;">Description</div>
<div  style="position:absolute;left:1724px;top:1448.5px;width:758px;height:79.5px;box-sizing:border-box;border:2px solid #4f8a50;background:#2d3733;border-radius:4px"></div>
<div style="position:absolute;top:1476.84px;font:bold 25px/1 'Liberation Sans', sans-serif;color:#888b8b;white-space:pre;transform:scaleX(0.9664);transform-origin:0 0;left:1929.12px;">Stage files/changes to commit</div>
<svg style="position:absolute;left:0;top:0;overflow:visible" width="1" height="1"><g transform="translate(-112 -76)"><rect x="1893.6" y="1641.3" width="4.6" height="4.6" rx="0.8" fill="#d3d4d7"/><path d="M1902 1643.6H1917.6" stroke="#d3d4d7" stroke-width="2.3" stroke-linecap="round"/><rect x="1893.6" y="1648.6000000000001" width="4.6" height="4.6" rx="0.8" fill="#d3d4d7"/><path d="M1902 1650.9H1917.6" stroke="#d3d4d7" stroke-width="2.3" stroke-linecap="round"/><rect x="1893.6" y="1655.9" width="4.6" height="4.6" rx="0.8" fill="#d3d4d7"/><path d="M1902 1658.2H1917.6" stroke="#d3d4d7" stroke-width="2.3" stroke-linecap="round"/></g></svg>
<svg style="position:absolute;left:0;top:0;overflow:visible" width="1" height="1"><g transform="translate(-112 -76)"><rect x="1959.2" y="1643.1" width="24.8" height="15.9" rx="2.2" fill="none" stroke="#d3d4d7" stroke-width="2.2"/><rect x="1962.4" y="1646.3" width="1.9" height="1.9" rx="0.5" fill="#d3d4d7"/><rect x="1966.5" y="1646.3" width="1.9" height="1.9" rx="0.5" fill="#d3d4d7"/><rect x="1970.6" y="1646.3" width="1.9" height="1.9" rx="0.5" fill="#d3d4d7"/><rect x="1974.7" y="1646.3" width="1.9" height="1.9" rx="0.5" fill="#d3d4d7"/><rect x="1978.8" y="1646.3" width="1.9" height="1.9" rx="0.5" fill="#d3d4d7"/><rect x="1964.4" y="1650.1" width="1.9" height="1.9" rx="0.5" fill="#d3d4d7"/><rect x="1968.5" y="1650.1" width="1.9" height="1.9" rx="0.5" fill="#d3d4d7"/><rect x="1972.6" y="1650.1" width="1.9" height="1.9" rx="0.5" fill="#d3d4d7"/><rect x="1976.7" y="1650.1" width="1.9" height="1.9" rx="0.5" fill="#d3d4d7"/><rect x="1962.4" y="1654" width="1.9" height="1.9" rx="0.5" fill="#d3d4d7"/><rect x="1978.8" y="1654" width="1.9" height="1.9" rx="0.5" fill="#d3d4d7"/><rect x="1966.4" y="1654.1" width="10.4" height="1.8" fill="#d3d4d7"/></g></svg>
<svg style="position:absolute;left:0;top:0;overflow:visible" width="1" height="1"><g transform="translate(-112 -76)"><g fill="none" stroke="#bdbec1" stroke-width="2.2" stroke-linecap="round"><circle cx="2074.4" cy="1648.3" r="8.5"/><path d="M2080.8 1654.6L2087.4 1661.2M2070.2 1648.2H2078.6M2074.4 1644V1652.4"/></g></g></svg>
<div style="position:absolute;top:1563.68px;font:normal 24px/1 'Liberation Sans', sans-serif;color:#d3d4d7;white-space:pre;-webkit-text-stroke:0.3px #d3d4d7;transform:scaleX(0.9803);transform-origin:0 0;left:1987.96px;">100%</div>
<div style="position:absolute;top:1563.68px;font:normal 24px/1 'Liberation Sans', sans-serif;color:#58b6ea;white-space:pre;-webkit-text-stroke:0.3px #58b6ea;transform:scaleX(1.0787);transform-origin:0 0;left:2099.66px;">Support</div>
<svg style="position:absolute;left:0;top:0;overflow:visible" width="1" height="1"><g transform="translate(-112 -76)"><defs><linearGradient id="kg" x1="0" y1="0" x2="0" y2="1"><stop offset="0" stop-color="#9fe3df"/><stop offset="1" stop-color="#5fb4ac"/></linearGradient><linearGradient id="kb" x1="0" y1="0" x2="0" y2="1"><stop offset="0" stop-color="#232a29"/><stop offset="1" stop-color="#0e1014"/></linearGradient></defs><circle cx="2354" cy="1650.7" r="19.8" fill="url(#kb)"/><path d="M2349.62 1641.09A11.2 11.2 0 0 0 2351.29 1662.27M2358.38 1641.09A11.2 11.2 0 0 1 2356.71 1662.27M2340.65 1645.73A14.5 14.5 0 0 0 2351.73 1665.72M2367.35 1645.73A14.5 14.5 0 0 1 2356.27 1665.72" fill="none" stroke="#78c9c3" stroke-width="1.35"/><path d="M2354 1639.2C2357 1641.6 2361 1644.6 2361.2 1647.8C2361 1650.4 2358.9 1651.6 2358.5 1653.4L2359 1655.2L2357.7 1656.6V1664.2H2356.2V1657.6H2355.6V1665H2352.4V1657.6H2351.8V1664.2H2350.3V1656.6L2349 1655.2L2349.5 1653.4C2349.1 1651.6 2347 1650.4 2346.8 1647.8C2347 1644.6 2351 1641.6 2354 1639.2Z" fill="url(#kg)"/><rect x="2352.8" y="1658.4" width="2.4" height="6.4" fill="#4f9a93"/><circle cx="2350.6" cy="1654.5" r="0.75" fill="#12161a"/><circle cx="2357.4" cy="1654.5" r="0.75" fill="#12161a"/></g></svg>
<svg style="position:absolute;left:0;top:0;overflow:visible" width="1" height="1"><g transform="translate(-112 -76)"><path d="M2389.6 1635.8H2483.2L2472.4 1665.8H2378.8Z" fill="#d95c32"/></g></svg>
<div style="position:absolute;top:1563.68px;font:normal 24px/1 'Liberation Sans', sans-serif;color:#ffffff;white-space:pre;-webkit-text-stroke:0.3px #ffffff;transform:scaleX(0.8229);transform-origin:0 0;left:2292.66px;">FREE</div>
<div  style="position:absolute;left:2386px;top:1558.5px;width:95px;height:33px;box-sizing:border-box;border:1.5px solid #3b3c42;border-radius:4px"></div>
<div style="position:absolute;top:1565.61px;font:normal 24px/1 'Liberation Mono', monospace;color:#d6d7da;white-space:pre;left:2398.50px;">9.7.1</div>
</div>
<div id="winb"></div>
</body></html>
